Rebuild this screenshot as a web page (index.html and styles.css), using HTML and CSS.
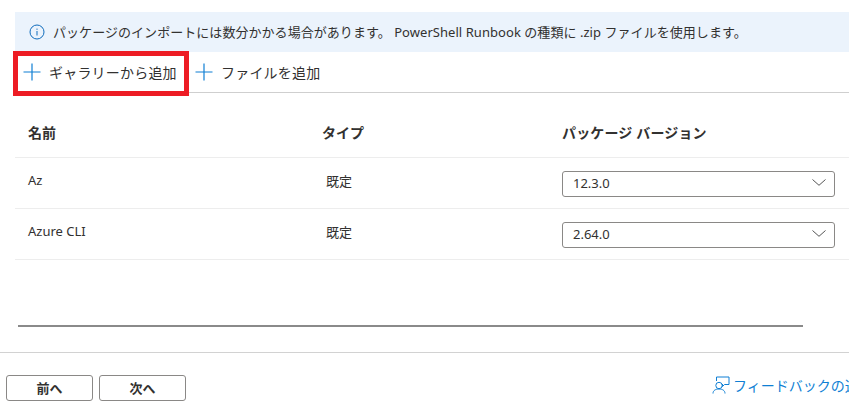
FILE: index.html

```html
<!DOCTYPE html>
<html lang="ja">
  <head>
    <meta charset="UTF-8" />
    <meta name="viewport" content="width=device-width, initial-scale=1.0" />
    <title>パッケージ</title>
    <link rel="stylesheet" href="styles.css">
  </head>

  <body>
    <div class="page">
      <div class="content">
        <!-- info banner -->
        <div class="banner">
          <svg class="info-icon" width="16" height="16" viewBox="0 0 16 16">
            <circle cx="8" cy="8" r="7" fill="none" stroke="#0f6cbd" stroke-width="1"/>
            <rect x="7.5" y="7" width="1" height="4.5" fill="#0f6cbd"/>
            <rect x="7.5" y="4.6" width="1" height="1.2" fill="#0f6cbd"/>
          </svg>
          <span>パッケージのインポートには数分かかる場合があります。 PowerShell Runbook の種類に .zip ファイルを使用します。</span>
        </div>

        <!-- toolbar -->
        <div class="toolbar">
          <button class="tool-btn tool-gallery">
            <svg class="plus" width="18" height="18" viewBox="0 0 18 18">
              <path d="M9 0.5V17.5M0.5 9H17.5" stroke="#0f7fd4" stroke-width="1.2" fill="none"/>
            </svg>
            <span>ギャラリーから追加</span>
          </button>
          <button class="tool-btn">
            <svg class="plus" width="18" height="18" viewBox="0 0 18 18">
              <path d="M9 0.5V17.5M0.5 9H17.5" stroke="#0f7fd4" stroke-width="1.2" fill="none"/>
            </svg>
            <span>ファイルを追加</span>
          </button>
        </div>

        <!-- package table -->
        <div class="table">
          <div class="row head-row">
            <div class="cell-name">名前</div>
            <div class="cell-type">タイプ</div>
            <div class="cell-version">パッケージ バージョン</div>
          </div>
          <div class="row">
            <div class="cell-name">Az</div>
            <div class="cell-type indent">既定</div>
            <div class="cell-version">
              <div class="select">
                <span>12.3.0</span>
                <svg width="14" height="7" viewBox="0 0 14 7"><path d="M0.5 0.5L7 6.3L13.5 0.5" stroke="#555" stroke-width="1" fill="none"/></svg>
              </div>
            </div>
          </div>
          <div class="row">
            <div class="cell-name">Azure CLI</div>
            <div class="cell-type indent">既定</div>
            <div class="cell-version">
              <div class="select">
                <span>2.64.0</span>
                <svg width="14" height="7" viewBox="0 0 14 7"><path d="M0.5 0.5L7 6.3L13.5 0.5" stroke="#555" stroke-width="1" fill="none"/></svg>
              </div>
            </div>
          </div>
        </div>

        <div class="scrollbar"></div>
      </div>

      <!-- footer -->
      <div class="footer">
        <button class="nav-btn">前へ</button>
        <button class="nav-btn">次へ</button>
        <a class="feedback" href="#">
          <svg width="18" height="18" viewBox="0 0 18 18">
            <path d="M4.5 5V1H17V8.5H12.5L10.5 10.5V8" stroke="#0f7fd4" stroke-width="1" fill="none"/>
            <circle cx="7" cy="9.5" r="3.2" stroke="#0f7fd4" stroke-width="1" fill="none"/>
            <path d="M1 17.5C1 14.5 3.5 13 7 13C10.5 13 13 14.5 13 17.5" stroke="#0f7fd4" stroke-width="1" fill="none"/>
          </svg>
          <span>フィードバックの送信</span>
        </a>
      </div>
    </div>
  </body>
</html>
```

FILE: styles.css

```css
*,
*::after {
  box-sizing: border-box;
}

html,
body {
  margin: 0;
  padding: 0;
  height: 100%;
  overflow: hidden;
  background: #ffffff;
}

body {
  font-family: "Noto Sans", "Open Sans", "Noto Sans CJK JP", sans-serif;
  font-size: 13px;
  color: #323130;
}

.page {
  width: 849px;
  height: 411px;
  overflow: hidden;
}

.content {
  height: 353px;
  padding: 12px 0 0 15px;
  border-bottom: 1px solid #d2d2d2;
}

/* banner */
.banner {
  display: flex;
  align-items: center;
  gap: 8px;
  height: 40px;
  padding: 0 0 1px 14px;
  background: #ebf3fc;
  font-size: 13px;
  letter-spacing: 0.05px;
  white-space: nowrap;
}

.info-icon {
  flex: none;
}

/* toolbar */
.toolbar {
  position: relative;
  display: flex;
  align-items: center;
  height: 41px;
  padding-bottom: 1px;
  border-bottom: 1px solid #cfcfcf;
}

.tool-btn {
  display: flex;
  align-items: center;
  gap: 8px;
  padding: 0;
  border: none;
  background: none;
  font: inherit;
  font-size: 14px;
  letter-spacing: 0.2px;
  color: #323130;
  white-space: nowrap;
}

.tool-gallery {
  width: 180px;
  padding-left: 8px;
}

.tool-gallery::after {
  content: "";
  position: absolute;
  left: -2px;
  top: -1px;
  width: 176px;
  height: 45px;
  border: 5px solid #ed1c24;
}

/* table */
.row {
  display: flex;
  align-items: center;
  height: 51px;
  border-bottom: 1px solid #ededed;
  font-size: 13px;
}

.head-row {
  height: 65px;
  padding-top: 18px;
  font-weight: 700;
  font-size: 14px;
}

.cell-name {
  width: 293px;
  padding-left: 13px;
  margin-top: -7px;
}

.head-row .cell-name,
.head-row .cell-type,
.head-row .cell-version {
  margin-top: -4px;
}

.cell-type {
  width: 240px;
  padding-left: 14px;
}

.cell-type.indent {
  padding-left: 18px;
  margin-top: -5px;
}

.cell-version {
  padding-left: 14px;
}

.head-row .cell-version {
  letter-spacing: 0.15px;
}

.select {
  display: flex;
  align-items: center;
  justify-content: space-between;
  width: 273px;
  height: 26px;
  padding: 0 8px 2px 10px;
  border: 1px solid #8a8886;
  border-radius: 3px;
  margin-top: 1px;
}

/* the grey line above the footer */
.scrollbar {
  width: 785px;
  height: 2px;
  margin: 65px 0 0 3px;
  background: #8a8a8a;
}

/* footer */
.footer {
  display: flex;
  align-items: center;
  gap: 6px;
  padding: 22px 0 0 6px;
  white-space: nowrap;
}

.nav-btn {
  flex: none;
  width: 87px;
  height: 26px;
  padding: 0 0 2px;
  border: 1px solid #8a8886;
  border-radius: 3px;
  background: #ffffff;
  font: inherit;
  font-weight: 700;
  font-size: 13px;
  color: #323130;
}

.feedback {
  flex: none;
  display: flex;
  align-items: center;
  gap: 4px;
  margin: 0 0 6px 520px;
  color: #0f7fd4;
  font-size: 14px;
  text-decoration: none;
}

.feedback span {
  margin-left: -1px;
}
```
